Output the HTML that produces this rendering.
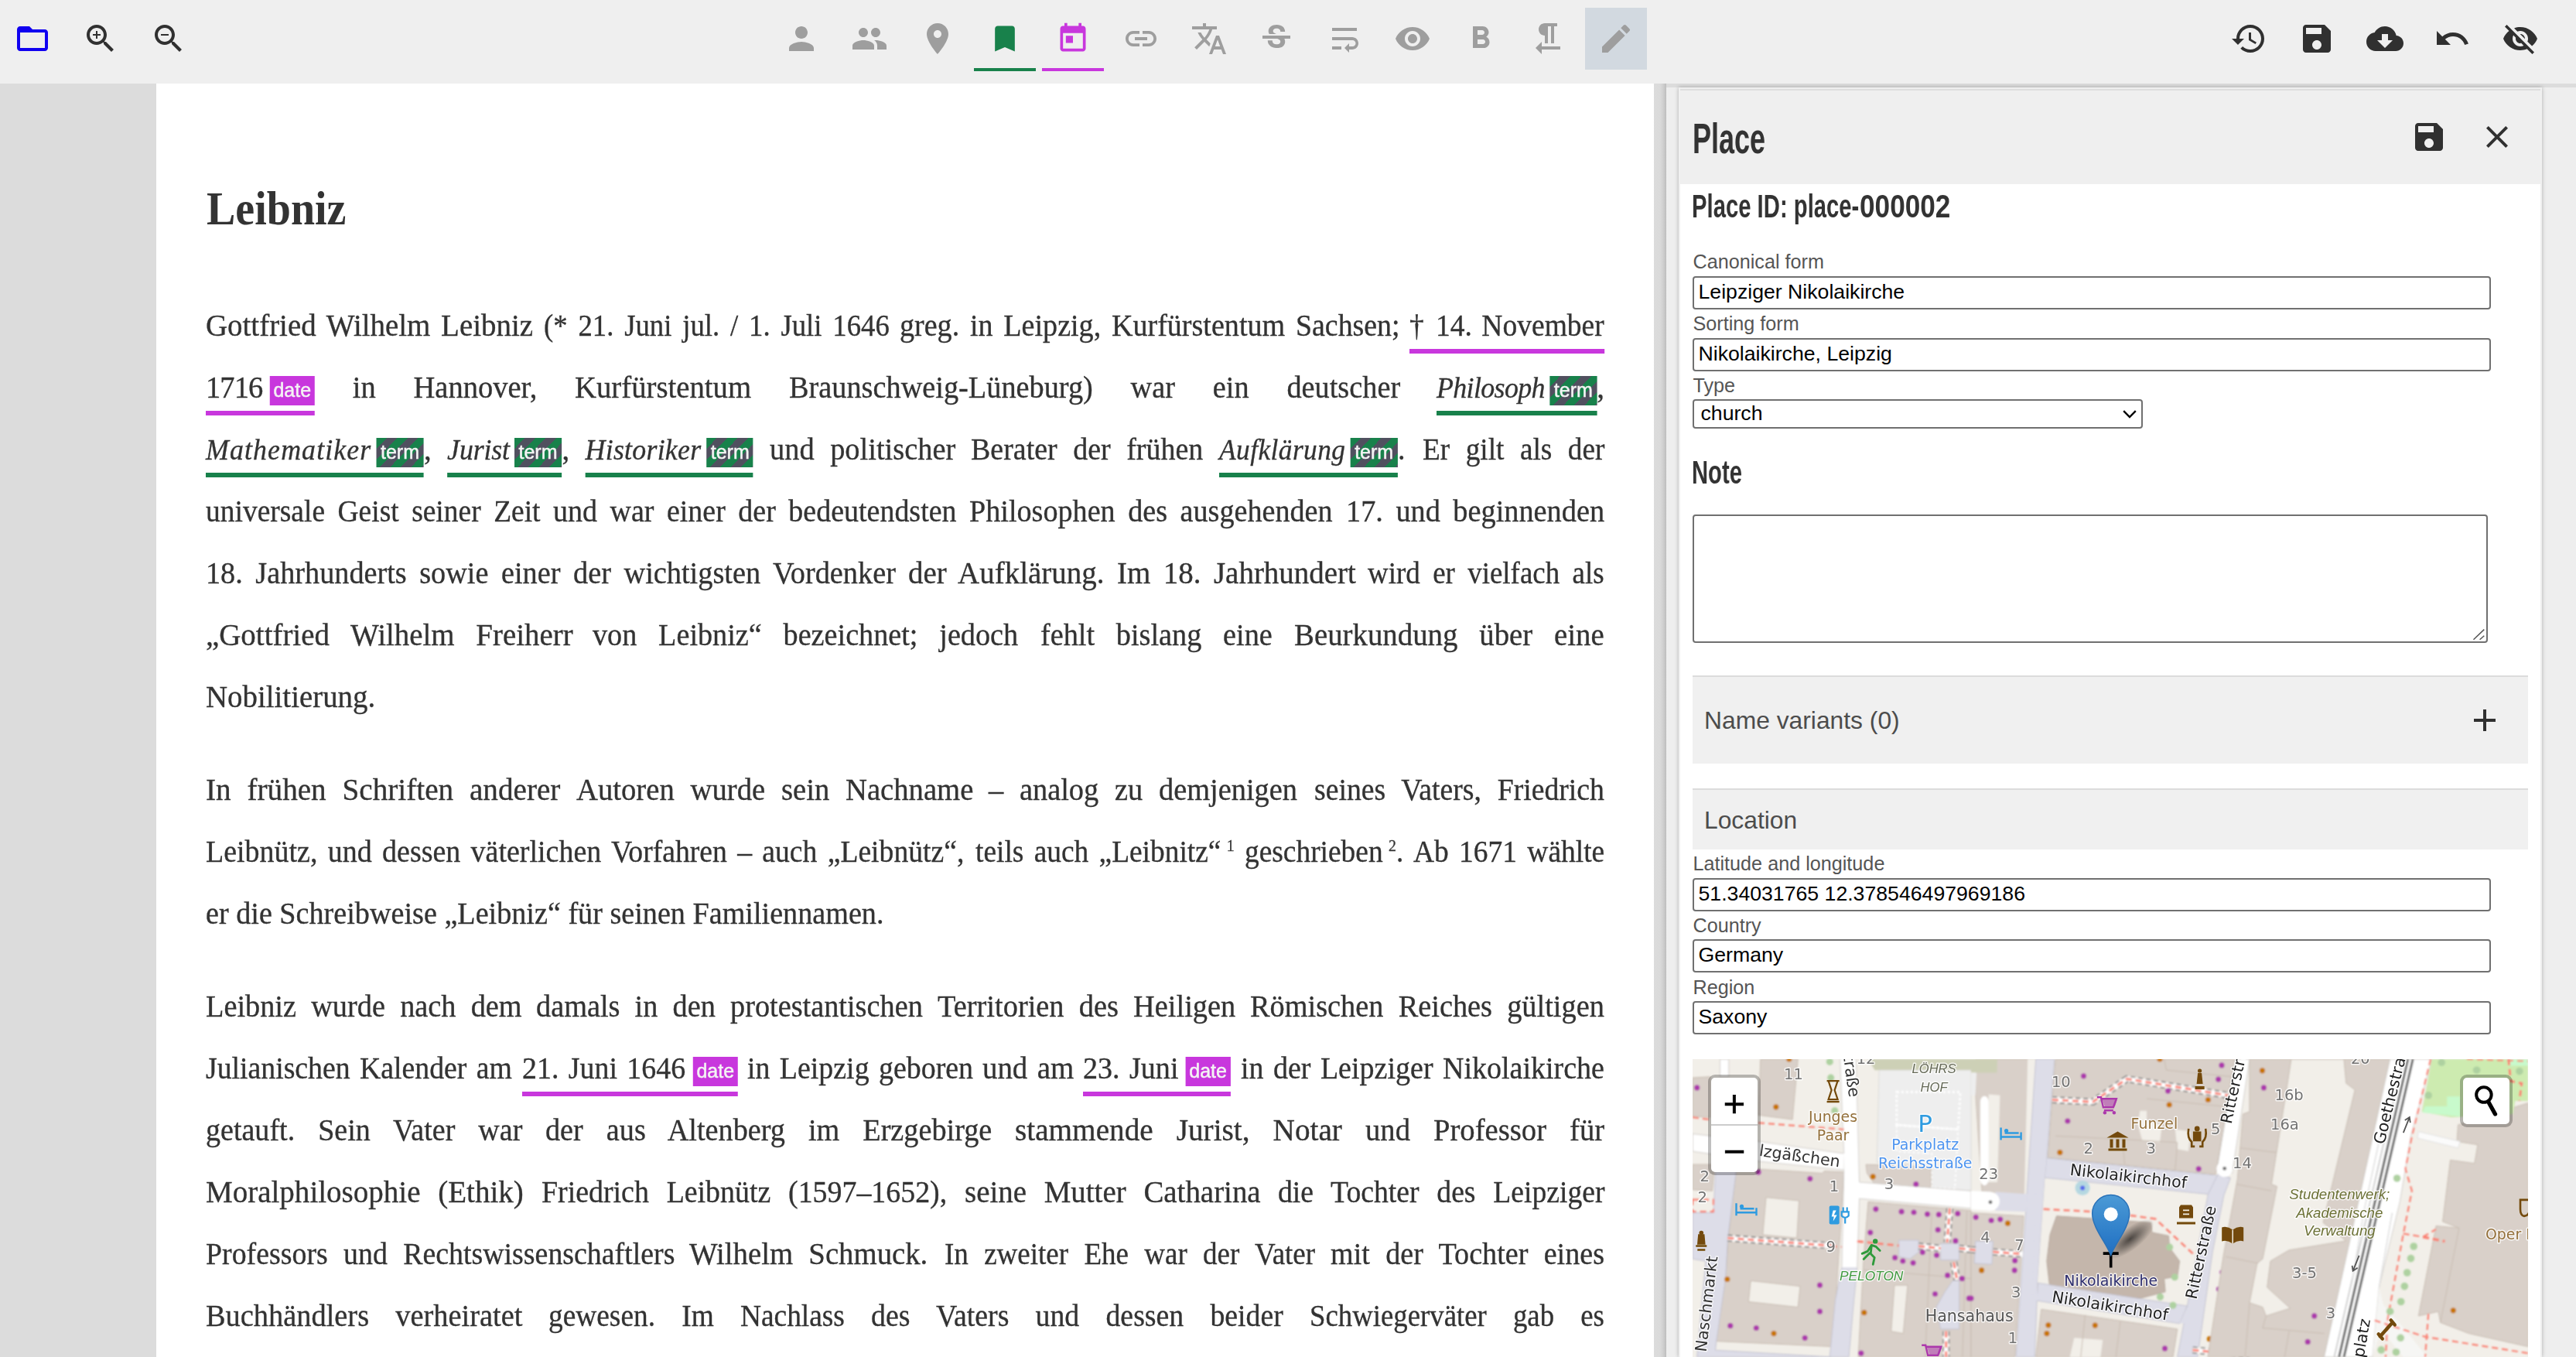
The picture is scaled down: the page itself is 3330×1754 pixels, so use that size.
<!DOCTYPE html>
<html lang="de"><head><meta charset="utf-8"><title>Leibniz</title>
<style>
html,body{margin:0;padding:0}
body{width:3330px;height:1754px;overflow:hidden;position:relative;background:#efefef;font-family:"Liberation Sans",sans-serif;color:#333}
.ic{position:absolute;display:block}
#toolbar{position:absolute;left:0;top:0;width:3330px;height:108px;background:#efefef}
.tbsel{position:absolute;background:#d2d9e0}
.tbul{position:absolute;top:88px;width:80px;height:4px}
#leftbar{position:absolute;left:0;top:108px;width:202px;height:1646px;background:#dcdcdc}
#page{position:absolute;left:202px;top:108px;width:1936px;height:1646px;background:#fff;overflow:hidden;font-family:"Liberation Serif",serif;color:#333}
#title{position:absolute;left:65px;top:120.6px;margin:0;font:bold 62px/80px "Liberation Serif",serif;color:#333;transform-origin:0 0;transform:scaleX(.903);white-space:nowrap}
#page p{margin:0}
.ln{position:absolute;left:64px;display:block;height:80px;line-height:80px;font-size:40.5px;white-space:nowrap;transform-origin:0 0;word-spacing:0;--k:.955;-webkit-text-stroke:.35px #333}
.ln.j{text-align:justify;text-align-last:justify;white-space:normal}
.ln.l{text-align:left}
.an{border-bottom:6px solid;padding-bottom:7.4px}
.an i{font-size:37.5px}
.an.d{border-color:#c837dd}
.an.t{border-color:#18814b}
.bd{display:inline-block;vertical-align:baseline;top:-1px;height:37.7px;width:calc(58px / var(--k));margin-left:calc(9.5px / var(--k));position:relative;line-height:37.7px}
.an.d .bd{background:#c837dd}
.an.t .bd{width:calc(61px / var(--k));margin-left:calc(6.5px / var(--k));background:repeating-linear-gradient(135deg,#18814b 0,#18814b 10px,#50505f 10px,#50505f 20px)}
.bd .in{display:block;font:25px/37.7px "Liberation Sans",sans-serif;color:#f4f4f4;-webkit-text-stroke:.5px #f4f4f4;text-align:center;text-align-last:center;white-space:nowrap;transform:scaleX(calc(1 / var(--k)));font-style:normal}
sup{font-size:21.5px;line-height:0;vertical-align:baseline;position:relative;top:-14.5px;margin-left:8px}
/* ---------- right side ---------- */
#gut{position:absolute;left:2138px;top:108px;width:16px;height:1646px;background:linear-gradient(to right,#dcdcdc 0,#dadada 8px,#cfcfcf 12px,#bdbdbd 16px)}
#side{position:absolute;left:2154px;top:108px;width:1176px;height:1646px;background:#eeeeee;border-top:5px solid #dcdcdc;box-sizing:border-box}
#card{position:absolute;left:2170px;top:113px;width:1116px;height:1641px;background:#fff;box-shadow:0 0 5px rgba(0,0,0,.28);box-sizing:border-box}
#card:before,#card:after{content:"";position:absolute;top:0;bottom:0;width:2px;background:#f0f0f0;z-index:3}#card:before{left:0}#card:after{right:0}
#chead{position:absolute;left:0;top:0;width:1116px;height:125px;background:#efefef}
#chead:before{content:"";position:absolute;left:2px;right:2px;top:2px;height:2px;background:#dedede}
.osw{position:absolute;margin:0;font-weight:bold;font-family:"Liberation Sans",sans-serif;color:#333;white-space:nowrap;transform-origin:0 0}
.lb{position:absolute;left:18.5px;font:25.2px/30px "Liberation Sans",sans-serif;color:#555;white-space:nowrap}
.inp{position:absolute;left:18px;width:1032px;height:43px;box-sizing:border-box;border:2px solid #707070;border-radius:4px;background:#fff;font:26.67px/37.5px "Liberation Sans",sans-serif;color:#000;padding:0 5.5px;white-space:nowrap;overflow:hidden}
.sel{position:absolute;left:18px;width:582px;height:38px;box-sizing:border-box;border:2px solid #707070;border-radius:4px;background:#fff;font:26.67px/33px "Liberation Sans",sans-serif;color:#000;padding:0 8.5px;white-space:nowrap}
.ta{position:absolute;left:18px;top:552px;width:1028px;height:166px;box-sizing:border-box;border:2px solid #707070;border-radius:4px;background:#fff}
.bar{position:absolute;left:18px;width:1080px;box-sizing:border-box;border-top:2px solid #dcdcdc;background:#f0f0f0}
.bar span{position:absolute;left:15px;font:31.8px/36px "Liberation Sans",sans-serif;color:#4c4c4c;white-space:nowrap}
#map{position:absolute;left:18px;top:1256px;width:1080px;height:385px;overflow:hidden;background:#d9d0c9}
#mapsvg{position:absolute;left:0;top:0;display:block}
.lctl{position:absolute;box-sizing:border-box;border:4px solid rgba(0,0,0,.25);border-radius:9px;background:#fff;background-clip:padding-box;overflow:hidden}
.lctl .lb1,.lctl .lb2{position:absolute;left:0;width:60px;height:60px;text-align:center;font:normal 49px/75px "Liberation Mono","DejaVu Sans Mono",monospace;-webkit-text-stroke:.6px #000;color:#000}
.lctl .lb1{top:0;border-bottom:2px solid #ccc}
.lctl .lb2{top:62px}
.osw .o1,.osw .o2{position:absolute;top:0;left:0;display:block;transform-origin:0 0;white-space:pre}
.osw .o1{transform:scaleX(.676)}
.osw .o2{left:217.5px;transform:scaleX(.8125)}

</style></head><body>
<div id="toolbar">
<svg class="ic" style="left:18.00px;top:26.00px;width:48px;height:48px" viewBox="0 0 24 24"><path fill="#1000f0" d="M20 6h-8l-2-2H4c-1.1 0-1.99.9-1.99 2L2 18c0 1.1.9 2 2 2h16c1.1 0 2-.9 2-2V8c0-1.1-.9-2-2-2zm0 12H4V8h16v10z"/></svg>
<svg class="ic" style="left:106.00px;top:26.00px;width:48px;height:48px" viewBox="0 0 24 24"><path fill="#303030" d="M15.5 14h-.79l-.28-.27C15.41 12.59 16 11.11 16 9.5 16 5.91 13.09 3 9.5 3S3 5.91 3 9.5 5.91 16 9.5 16c1.61 0 3.09-.59 4.23-1.57l.27.28v.79l5 4.99L20.49 19l-4.99-5zm-6 0C7.01 14 5 11.99 5 9.5S7.01 5 9.5 5 14 7.01 14 9.5 11.99 14 9.5 14zM12 10h-2v2H9v-2H7V9h2V7h1v2h2v1z"/></svg>
<svg class="ic" style="left:194.00px;top:26.00px;width:48px;height:48px" viewBox="0 0 24 24"><path fill="#303030" d="M15.5 14h-.79l-.28-.27C15.41 12.59 16 11.11 16 9.5 16 5.91 13.09 3 9.5 3S3 5.91 3 9.5 5.91 16 9.5 16c1.61 0 3.09-.59 4.23-1.57l.27.28v.79l5 4.99L20.49 19l-4.99-5zm-6 0C7.01 14 5 11.99 5 9.5S7.01 5 9.5 5 14 7.01 14 9.5 11.99 14 9.5 14zM7 9h5v1H7z"/></svg>
<div class="tbsel" style="left:2049px;top:10px;width:80px;height:80px"></div>
<svg class="ic" style="left:1012.00px;top:26.00px;width:48px;height:48px" viewBox="0 0 24 24"><path fill="#9e9e9e" d="M12 12c2.21 0 4-1.79 4-4s-1.79-4-4-4-4 1.79-4 4 1.79 4 4 4zm0 2c-2.67 0-8 1.34-8 4v2h16v-2c0-2.66-5.33-4-8-4z"/></svg>
<svg class="ic" style="left:1099.75px;top:26.00px;width:48px;height:48px" viewBox="0 0 24 24"><path fill="#9e9e9e" d="M16 11c1.66 0 2.99-1.34 2.99-3S17.66 5 16 5c-1.66 0-3 1.34-3 3s1.34 3 3 3zm-8 0c1.66 0 2.99-1.34 2.99-3S9.66 5 8 5C6.34 5 5 6.34 5 8s1.34 3 3 3zm0 2c-2.33 0-7 1.17-7 3.5V19h14v-2.5c0-2.33-4.67-3.5-7-3.5zm8 0c-.29 0-.62.02-.97.05 1.16.84 1.97 1.97 1.97 3.45V19h6v-2.5c0-2.33-4.67-3.5-7-3.5z"/></svg>
<svg class="ic" style="left:1187.50px;top:26.00px;width:48px;height:48px" viewBox="0 0 24 24"><path fill="#9e9e9e" d="M12 2C8.13 2 5 5.13 5 9c0 5.25 7 13 7 13s7-7.75 7-13c0-3.87-3.13-7-7-7zm0 9.5c-1.38 0-2.5-1.12-2.5-2.5s1.12-2.5 2.5-2.5 2.5 1.12 2.5 2.5-1.12 2.5-2.5 2.5z"/></svg>
<svg class="ic" style="left:1277.25px;top:28.00px;width:44px;height:44px" viewBox="0 0 24 24"><path fill="#18814b" d="M17 3H7c-1.1 0-1.99.9-1.99 2L5 21l7-3 7 3V5c0-1.1-.9-2-2-2z"/></svg>
<div class="tbul" style="left:1259.25px;background:#18814b"></div>
<svg class="ic" style="left:1365.00px;top:28.00px;width:44px;height:44px" viewBox="0 0 24 24"><path fill="#c837dd" d="M19 3h-1V1h-2v2H8V1H6v2H5c-1.11 0-1.99.9-1.99 2L3 19c0 1.1.89 2 2 2h14c1.1 0 2-.9 2-2V5c0-1.1-.9-2-2-2zm0 16H5V8h14v11zM7 10h5v5H7z"/></svg>
<div class="tbul" style="left:1347.00px;background:#c837dd"></div>
<svg class="ic" style="left:1450.75px;top:26.00px;width:48px;height:48px" viewBox="0 0 24 24"><path fill="#9e9e9e" d="M3.9 12c0-1.71 1.39-3.1 3.1-3.1h4V7H7c-2.76 0-5 2.24-5 5s2.24 5 5 5h4v-1.9H7c-1.71 0-3.1-1.39-3.1-3.1zM8 13h8v-2H8v2zm9-6h-4v1.9h4c1.71 0 3.1 1.39 3.1 3.1s-1.39 3.1-3.1 3.1h-4V17h4c2.76 0 5-2.24 5-5s-2.24-5-5-5z"/></svg>
<svg class="ic" style="left:1538.50px;top:26.00px;width:48px;height:48px" viewBox="0 0 24 24"><path fill="#9e9e9e" d="M12.87 15.07l-2.54-2.51.03-.03c1.74-1.94 2.98-4.17 3.71-6.53H17V4h-7V2H8v2H1v1.99h11.17C11.5 7.92 10.44 9.75 9 11.35 8.07 10.32 7.3 9.19 6.69 8h-2c.73 1.63 1.73 3.17 2.98 4.56l-5.09 5.02L4 19l5-5 3.11 3.11.76-2.04zM18.5 10h-2L12 22h2l1.12-3h4.75L21 22h2l-4.5-12zm-2.62 7l1.62-4.33L19.12 17h-3.24z"/></svg>
<svg class="ic" style="left:1626.25px;top:26.00px;width:48px;height:48px" viewBox="0 0 24 24"><path fill="#9e9e9e" d="M7.24 8.75c-.26-.48-.39-1.03-.39-1.67 0-.61.13-1.16.4-1.67.26-.5.63-.93 1.11-1.29.48-.35 1.05-.63 1.7-.83.66-.19 1.39-.29 2.18-.29.81 0 1.54.11 2.21.34.66.22 1.23.54 1.69.94.47.4.83.88 1.08 1.43.25.55.38 1.15.38 1.81h-3.01c0-.31-.05-.59-.15-.85-.09-.27-.24-.49-.44-.68-.2-.19-.45-.33-.75-.44-.3-.1-.66-.16-1.06-.16-.39 0-.74.04-1.03.13-.29.09-.53.21-.72.36-.19.16-.34.34-.44.55-.1.21-.15.43-.15.66 0 .48.25.88.74 1.21.38.25.77.48 1.41.7H7.39c-.05-.08-.11-.17-.15-.25zM21 12v-2H3v2h9.62c.18.07.4.14.55.2.37.17.66.34.87.51.21.17.35.36.43.57.07.2.11.43.11.69 0 .23-.05.45-.14.66-.09.2-.23.38-.42.53-.19.15-.42.26-.71.35-.29.08-.63.13-1.01.13-.43 0-.83-.04-1.18-.13s-.66-.23-.91-.42c-.25-.19-.45-.44-.59-.75-.14-.31-.25-.76-.25-1.21H6.4c0 .55.08 1.13.24 1.58.16.45.37.85.65 1.21.28.35.6.66.98.92.37.26.78.48 1.22.65.44.17.9.3 1.38.39.48.08.96.13 1.44.13.8 0 1.53-.09 2.18-.28s1.21-.45 1.67-.79c.46-.34.82-.77 1.07-1.27s.38-1.07.38-1.71c0-.6-.1-1.14-.31-1.61-.05-.11-.11-.23-.17-.33H21z"/></svg>
<svg class="ic" style="left:1714.00px;top:26.00px;width:48px;height:48px" viewBox="0 0 24 24"><path fill="#9e9e9e" d="M4 19h6v-2H4v2zM20 5H4v2h16V5zm-3 6H4v2h13.25c1.1 0 2 .9 2 2s-.9 2-2 2H15v-2l-3 3 3 3v-2h2c2.21 0 4-1.79 4-4s-1.79-4-4-4z"/></svg>
<svg class="ic" style="left:1801.75px;top:26.00px;width:48px;height:48px" viewBox="0 0 24 24"><path fill="#9e9e9e" d="M12 4.5C7 4.5 2.73 7.61 1 12c1.73 4.39 6 7.5 11 7.5s9.27-3.11 11-7.5c-1.73-4.39-6-7.5-11-7.5zM12 17c-2.76 0-5-2.24-5-5s2.24-5 5-5 5 2.24 5 5-2.24 5-5 5zm0-8c-1.66 0-3 1.34-3 3s1.34 3 3 3 3-1.34 3-3-1.34-3-3-3z"/></svg>
<svg class="ic" style="left:1889.50px;top:26.00px;width:48px;height:48px" viewBox="0 0 24 24"><path fill="#9e9e9e" d="M15.6 10.79c.97-.67 1.65-1.77 1.65-2.79 0-2.26-1.75-4-4-4H7v14h7.04c2.09 0 3.71-1.7 3.71-3.79 0-1.52-.86-2.82-2.15-3.42zM10 6.5h3c.83 0 1.5.67 1.5 1.5s-.67 1.5-1.5 1.5h-3v-3zm3.5 9H10v-3h3.5c.83 0 1.5.67 1.5 1.5s-.67 1.5-1.5 1.5z"/></svg>
<svg class="ic" style="left:1977.25px;top:26.00px;width:48px;height:48px" viewBox="0 0 24 24"><path fill="#9e9e9e" d="M10 10v5h2V4h2v11h2V4h2V2h-8C7.79 2 6 3.79 6 6s1.79 4 4 4zm-2 7v-3l-4 4 4 4v-3h12v-2H8z"/></svg>
<svg class="ic" style="left:2065.00px;top:26.00px;width:48px;height:48px" viewBox="0 0 24 24"><path fill="#9e9e9e" d="M3 17.25V21h3.75L17.81 9.94l-3.75-3.75L3 17.25zM20.71 7.04c.39-.39.39-1.02 0-1.41l-2.34-2.34c-.39-.39-1.02-.39-1.41 0l-1.83 1.83 3.75 3.75 1.83-1.83z"/></svg>
<svg class="ic" style="left:2883.00px;top:26.00px;width:48px;height:48px" viewBox="0 0 24 24"><path fill="#303030" d="M13 3c-4.97 0-9 4.03-9 9H1l3.89 3.89.07.14L9 12H6c0-3.87 3.13-7 7-7s7 3.13 7 7-3.13 7-7 7c-1.93 0-3.68-.79-4.94-2.06l-1.42 1.42C8.27 19.99 10.51 21 13 21c4.97 0 9-4.03 9-9s-4.03-9-9-9zm-1 5v5l4.28 2.54.72-1.21-3.5-2.08V8H12z"/></svg>
<svg class="ic" style="left:2970.75px;top:26.00px;width:48px;height:48px" viewBox="0 0 24 24"><path fill="#303030" d="M17 3H5c-1.11 0-2 .9-2 2v14c0 1.1.89 2 2 2h14c1.1 0 2-.9 2-2V7l-4-4zm-5 16c-1.66 0-3-1.34-3-3s1.34-3 3-3 3 1.34 3 3-1.34 3-3 3zm3-10H5V5h10v4z"/></svg>
<svg class="ic" style="left:3058.50px;top:26.00px;width:48px;height:48px" viewBox="0 0 24 24"><path fill="#303030" d="M19.35 10.04C18.67 6.59 15.64 4 12 4 9.11 4 6.6 5.64 5.35 8.04 2.34 8.36 0 10.91 0 14c0 3.31 2.69 6 6 6h13c2.76 0 5-2.24 5-5 0-2.64-2.05-4.78-4.65-4.96zM17 13l-5 5-5-5h3V9h4v4h3z"/></svg>
<svg class="ic" style="left:3146.25px;top:26.00px;width:48px;height:48px" viewBox="0 0 24 24"><path fill="#303030" d="M12.5 8c-2.65 0-5.05.99-6.9 2.6L2 7v9h9l-3.62-3.62c1.39-1.16 3.16-1.88 5.12-1.88 3.54 0 6.55 2.31 7.6 5.5l2.37-.78C21.08 11.03 17.15 8 12.5 8z"/></svg>
<svg class="ic" style="left:3234.00px;top:26.00px;width:48px;height:48px" viewBox="0 0 24 24"><path fill="#303030" d="M12 7c2.76 0 5 2.24 5 5 0 .65-.13 1.26-.36 1.83l2.92 2.92c1.51-1.26 2.7-2.89 3.43-4.75-1.73-4.39-6-7.5-11-7.5-1.4 0-2.74.25-3.98.7l2.16 2.16C10.74 7.13 11.35 7 12 7zM2 4.27l2.28 2.28.46.46C3.08 8.3 1.78 10.02 1 12c1.73 4.39 6 7.5 11 7.5 1.55 0 3.03-.3 4.38-.84l.42.42L19.73 22 21 20.73 3.27 3 2 4.27zM7.53 9.8l1.55 1.55c-.05.21-.08.43-.08.65 0 1.66 1.34 3 3 3 .22 0 .44-.03.65-.08l1.55 1.55c-.67.33-1.41.53-2.2.53-2.76 0-5-2.24-5-5 0-.79.2-1.53.53-2.2zm4.31-.78l3.15 3.15.02-.16c0-1.66-1.34-3-3-3l-.17.01z"/></svg>
</div>
<div id="leftbar"></div>
<div id="page">
<h1 id="title">Leibniz</h1>
<p>
<span class="ln j" style="top:273.33px;left:64.00px;width:440.24px;--k:0.9608;transform:scaleX(0.9608)">Gottfried Wilhelm Leibniz</span> 
<span class="ln j" style="top:273.33px;left:500.60px;width:492.36px;--k:0.9075;transform:scaleX(0.9075)">(* 21. Juni jul. / 1. Juli 1646</span> 
<span class="ln j" style="top:273.33px;left:961.00px;width:529.92px;--k:0.9400;transform:scaleX(0.9400)">greg. in Leipzig, Kurfürstentum</span> 
<span class="ln l" style="top:273.33px;left:1473.20px;width:143.97px;--k:0.9342;transform:scaleX(0.9342)">Sachsen;</span> 
<span class="ln j" style="top:273.33px;left:1620.20px;width:271.60px;--k:0.9271;transform:scaleX(0.9271)"><span class="an d">† 14. November</span></span>
<span class="ln j" style="top:353.33px;left:64.00px;width:450.47px;--k:0.9512;transform:scaleX(0.9512)"><span class="an d"><span style="letter-spacing:-0.95px">1716</span><span class="bd"><span class="in">date</span></span></span> in Hannover,</span> 
<span class="ln l" style="top:353.33px;left:541.30px;width:238.45px;--k:0.9566;transform:scaleX(0.9566)">Kurfürstentum</span> 
<span class="ln j" style="top:353.33px;left:818.30px;width:835.55px;--k:0.9457;transform:scaleX(0.9457)">Braunschweig-Lüneburg) war ein deutscher</span> 
<span class="ln l" style="top:353.33px;left:1655.00px;width:226.84px;--k:0.9566;transform:scaleX(0.9566)"><span class="an t"><i style="letter-spacing:-0.66px">Philosoph</i><span class="bd"><span class="in">term</span></span></span>,</span>
<span class="ln j" style="top:433.33px;left:64.00px;width:741.48px;--k:0.9546;transform:scaleX(0.9546)"><span class="an t"><i style="letter-spacing:1.19px">Mathematiker</i><span class="bd"><span class="in">term</span></span></span>, <span class="an t"><i style="letter-spacing:-0.13px">Jurist</i><span class="bd"><span class="in">term</span></span></span>, <span class="an t"><i style="letter-spacing:0.27px">Historiker</i><span class="bd"><span class="in">term</span></span></span></span> 
<span class="ln j" style="top:433.33px;left:792.70px;width:253.33px;--k:0.9486;transform:scaleX(0.9486)">und politischer</span> 
<span class="ln j" style="top:433.33px;left:1053.30px;width:320.33px;--k:0.9375;transform:scaleX(0.9375)">Berater der frühen</span> 
<span class="ln l" style="top:433.33px;left:1374.30px;width:255.18px;--k:0.9425;transform:scaleX(0.9425)"><span class="an t"><i style="letter-spacing:0.47px">Aufklärung</i><span class="bd"><span class="in">term</span></span></span>.</span> 
<span class="ln j" style="top:433.33px;left:1636.50px;width:255.72px;--k:0.9209;transform:scaleX(0.9209)">Er gilt als der</span>
<span class="ln j" style="top:513.33px;left:64.00px;width:467.33px;--k:0.9255;transform:scaleX(0.9255)">universale Geist seiner Zeit</span> 
<span class="ln j" style="top:513.33px;left:512.80px;width:556.17px;--k:0.9378;transform:scaleX(0.9378)">und war einer der bedeutendsten</span> 
<span class="ln j" style="top:513.33px;left:1050.60px;width:498.45px;--k:0.9421;transform:scaleX(0.9421)">Philosophen des ausgehenden</span> 
<span class="ln j" style="top:513.33px;left:1537.90px;width:353.20px;--k:0.9459;transform:scaleX(0.9459)">17. und beginnenden</span>
<span class="ln j" style="top:593.33px;left:64.00px;width:485.43px;--k:0.9443;transform:scaleX(0.9443)">18. Jahrhunderts sowie einer</span> 
<span class="ln j" style="top:593.33px;left:538.60px;width:440.52px;--k:0.9466;transform:scaleX(0.9466)">der wichtigsten Vordenker</span> 
<span class="ln j" style="top:593.33px;left:971.80px;width:601.71px;--k:0.9621;transform:scaleX(0.9621)">der Aufklärung. Im 18. Jahrhundert</span> 
<span class="ln j" style="top:593.33px;left:1566.40px;width:335.44px;--k:0.9110;transform:scaleX(0.9110)">wird er vielfach als</span>
<span class="ln j" style="top:673.33px;left:64.00px;width:494.11px;--k:0.9607;transform:scaleX(0.9607)">„Gottfried Wilhelm Freiherr</span> 
<span class="ln j" style="top:673.33px;left:564.40px;width:583.18px;--k:0.9433;transform:scaleX(0.9433)">von Leibniz“ bezeichnet; jedoch</span> 
<span class="ln j" style="top:673.33px;left:1143.00px;width:317.57px;--k:0.9441;transform:scaleX(0.9441)">fehlt bislang eine</span> 
<span class="ln j" style="top:673.33px;left:1471.30px;width:417.89px;--k:0.9589;transform:scaleX(0.9589)">Beurkundung über eine</span>
<span class="ln l" style="top:753.33px;left:64px;width:1883.33px;--k:0.9600;transform:scaleX(0.9600)">Nobilitierung.</span>
</p>
<p>
<span class="ln j" style="top:873.33px;left:64.00px;width:473.79px;--k:0.9675;transform:scaleX(0.9675)">In frühen Schriften anderer</span> 
<span class="ln j" style="top:873.33px;left:542.70px;width:537.68px;--k:0.9548;transform:scaleX(0.9548)">Autoren wurde sein Nachname</span> 
<span class="ln j" style="top:873.33px;left:1076.40px;width:421.26px;--k:0.9472;transform:scaleX(0.9472)">– analog zu demjenigen</span> 
<span class="ln j" style="top:873.33px;left:1497.10px;width:402.74px;--k:0.9309;transform:scaleX(0.9309)">seines Vaters, Friedrich</span>
<span class="ln j" style="top:953.33px;left:64.00px;width:545.25px;--k:0.9377;transform:scaleX(0.9377)">Leibnütz, und dessen väterlichen</span> 
<span class="ln j" style="top:953.33px;left:587.50px;width:490.83px;--k:0.9298;transform:scaleX(0.9298)">Vorfahren – auch „Leibnütz“,</span> 
<span class="ln j" style="top:953.33px;left:1058.80px;width:599.09px;--k:0.9236;transform:scaleX(0.9236)">teils auch „Leibnitz“<sup>1</sup> geschrieben<sup>2</sup>.</span> 
<span class="ln j" style="top:953.33px;left:1624.80px;width:267.21px;--k:0.9251;transform:scaleX(0.9251)">Ab 1671 wählte</span>
<span class="ln l" style="top:1033.33px;left:64px;width:1918.51px;--k:0.9424;transform:scaleX(0.9424)">er die Schreibweise „Leibniz“ für seinen Familiennamen.</span>
</p>
<p>
<span class="ln j" style="top:1153.33px;left:64.00px;width:431.99px;--k:0.9459;transform:scaleX(0.9459)">Leibniz wurde nach dem</span> 
<span class="ln j" style="top:1153.33px;left:491.10px;width:528.82px;--k:0.9451;transform:scaleX(0.9451)">damals in den protestantischen</span> 
<span class="ln j" style="top:1153.33px;left:1009.90px;width:406.55px;--k:0.9477;transform:scaleX(0.9477)">Territorien des Heiligen</span> 
<span class="ln j" style="top:1153.33px;left:1414.20px;width:483.75px;--k:0.9464;transform:scaleX(0.9464)">Römischen Reiches gültigen</span>
<span class="ln j" style="top:1233.33px;left:64.00px;width:424.71px;--k:0.9322;transform:scaleX(0.9322)">Julianischen Kalender am</span> 
<span class="ln j" style="top:1233.33px;left:473.10px;width:623.21px;--k:0.9355;transform:scaleX(0.9355)"><span class="an d"><span>21. Juni 1646</span><span class="bd"><span class="in">date</span></span></span> in Leipzig geboren</span> 
<span class="ln j" style="top:1233.33px;left:1068.30px;width:123.15px;--k:0.9598;transform:scaleX(0.9598)">und am</span> 
<span class="ln j" style="top:1233.33px;left:1197.90px;width:203.10px;--k:0.9404;transform:scaleX(0.9404)"><span class="an d"><span>23. Juni</span><span class="bd"><span class="in">date</span></span></span></span> 
<span class="ln j" style="top:1233.33px;left:1402.00px;width:500.67px;--k:0.9387;transform:scaleX(0.9387)">in der Leipziger Nikolaikirche</span>
<span class="ln j" style="top:1313.33px;left:64.00px;width:435.80px;--k:0.9394;transform:scaleX(0.9394)">getauft. Sein Vater war</span> 
<span class="ln j" style="top:1313.33px;left:503.30px;width:611.44px;--k:0.9442;transform:scaleX(0.9442)">der aus Altenberg im Erzgebirge</span> 
<span class="ln j" style="top:1313.33px;left:1110.40px;width:436.47px;--k:0.9689;transform:scaleX(0.9689)">stammende Jurist, Notar</span> 
<span class="ln j" style="top:1313.33px;left:1562.90px;width:323.83px;--k:0.9545;transform:scaleX(0.9545)">und Professor für</span>
<span class="ln j" style="top:1393.33px;left:64.00px;width:426.35px;--k:0.9635;transform:scaleX(0.9635)">Moralphilosophie (Ethik)</span> 
<span class="ln j" style="top:1393.33px;left:497.90px;width:560.51px;--k:0.9352;transform:scaleX(0.9352)">Friedrich Leibnütz (1597–1652),</span> 
<span class="ln j" style="top:1393.33px;left:1045.20px;width:398.35px;--k:0.9605;transform:scaleX(0.9605)">seine Mutter Catharina</span> 
<span class="ln j" style="top:1393.33px;left:1449.50px;width:454.60px;--k:0.9294;transform:scaleX(0.9294)">die Tochter des Leipziger</span>
<span class="ln j" style="top:1473.33px;left:64.00px;width:648.58px;--k:0.9350;transform:scaleX(0.9350)">Professors und Rechtswissenschaftlers</span> 
<span class="ln j" style="top:1473.33px;left:689.40px;width:322.17px;--k:0.9570;transform:scaleX(0.9570)">Wilhelm Schmuck.</span> 
<span class="ln j" style="top:1473.33px;left:1019.40px;width:524.04px;--k:0.9143;transform:scaleX(0.9143)">In zweiter Ehe war der Vater</span> 
<span class="ln j" style="top:1473.33px;left:1518.00px;width:376.00px;--k:0.9415;transform:scaleX(0.9415)">mit der Tochter eines</span>
<span class="ln j" style="top:1553.33px;left:64.00px;width:431.91px;--k:0.9479;transform:scaleX(0.9479)">Buchhändlers verheiratet</span> 
<span class="ln j" style="top:1553.33px;left:507.40px;width:414.86px;--k:0.9230;transform:scaleX(0.9230)">gewesen. Im Nachlass</span> 
<span class="ln j" style="top:1553.33px;left:924.30px;width:570.96px;--k:0.9333;transform:scaleX(0.9333)">des Vaters und dessen beider</span> 
<span class="ln j" style="top:1553.33px;left:1491.10px;width:419.41px;--k:0.9082;transform:scaleX(0.9082)">Schwiegerväter gab es</span>
</p>
</div>
<div id="gut"></div>
<div id="side"></div>
<div id="card">
 <div id="chead">
  <h2 class="osw" style="left:18px;top:33.6px;font-size:55.6px;line-height:64px;transform:scaleX(.648)">Place</h2>
  <svg class="ic" style="left:946px;top:40px;width:48px;height:48px" viewBox="0 0 24 24"><path fill="#303030" d="M17 3H5c-1.11 0-2 .9-2 2v14c0 1.1.89 2 2 2h14c1.1 0 2-.9 2-2V7l-4-4zm-5 16c-1.66 0-3-1.34-3-3s1.34-3 3-3 3 1.34 3 3-1.34 3-3 3zm3-10H5V5h10v4z"/></svg>
  <svg class="ic" style="left:1034px;top:40px;width:48px;height:48px" viewBox="0 0 24 24"><path fill="#303030" d="M19 6.41L17.59 5 12 10.59 6.41 5 5 6.41 10.59 12 5 17.59 6.41 19 12 13.41 17.59 19 19 17.59 13.41 12z"/></svg>
 </div>
 <h3 class="osw" style="left:16.5px;top:128px;font-size:43.3px;line-height:50px"><span class="o1">Place ID: place-</span><span class="o2">000002</span></h3>
 <label class="lb" style="top:210.3px">Canonical form</label>
 <div class="inp" style="top:244px">Leipziger Nikolaikirche</div>
 <label class="lb" style="top:290.3px">Sorting form</label>
 <div class="inp" style="top:324px">Nikolaikirche, Leipzig</div>
 <label class="lb" style="top:370.3px">Type</label>
 <div class="sel" style="top:403px">church<svg class="ic" style="left:0;top:0;width:578px;height:34px" viewBox="2 2 578 34"><path d="M557.2 15.200l7.800 7.800 7.800-7.800" fill="none" stroke="#000" stroke-width="2.400"/></svg></div>
 <h3 class="osw" style="left:16.5px;top:471.700px;font-size:43.3px;line-height:50px;transform:scaleX(.675)">Note</h3>
 <div class="ta"><svg class="ic" style="left:0;top:0;width:1024px;height:162px" viewBox="2 2 1024 162"><path d="M1009.5 161.800L1023.300 148.600M1017.600 161.800l5.700-5.100" fill="none" stroke="#555" stroke-width="1.500"/></svg></div>
 <div class="bar" style="top:760px;height:114px"><span style="top:37.500px">Name variants (0)</span>
  <svg class="ic" style="left:1000px;top:32px;width:48px;height:48px" viewBox="0 0 24 24"><path fill="#303030" d="M19 13h-6v6h-2v-6H5v-2h6V5h2v6h6v2z"/></svg></div>
 <div class="bar" style="top:906px;height:79px"><span style="top:20.500px">Location</span></div>
 <label class="lb" style="top:988.300px">Latitude and longitude</label>
 <div class="inp" style="top:1022px">51.34031765 12.378546497969186</div>
 <label class="lb" style="top:1068.300px">Country</label>
 <div class="inp" style="top:1101px">Germany</div>
 <label class="lb" style="top:1147.500px">Region</label>
 <div class="inp" style="top:1181px">Saxony</div>
 <div id="map">
<svg id="mapsvg" width="1080" height="385" viewBox="0 0 1080 385" font-family="DejaVu Sans, Liberation Sans, sans-serif">
<rect width="1080" height="385" fill="#f2efe9"/>
<g filter="url(#mb)">
<polygon points="0.0,24.1 22.7,22.7 22.7,75.2 0.0,73.8" fill="#d9d0c9" stroke="#c8bcb1" stroke-width="1"/>
<polygon points="87.9,0.0 136.2,0.0 129.1,78.0 85.1,72.3" fill="#d9d0c9" stroke="#c8bcb1" stroke-width="1"/>
<polygon points="0.0,136.2 28.4,136.2 25.5,170.2 0.0,168.8" fill="#d9d0c9" stroke="#c8bcb1" stroke-width="1"/>
<polygon points="56.7,140.4 167.4,147.5 170.2,144.7 195.7,146.1 181.6,371.6 29.8,364.5 42.6,283.7 46.8,227.0" fill="#d9d0c9" stroke="#c8bcb1" stroke-width="1"/>
<polygon points="95.0,178.7 137.6,183.0 134.8,231.2 90.8,227.0" fill="#f2efe9" stroke="#c8bcb1" stroke-width="1"/>
<polygon points="75.2,286.5 139.0,293.6 136.2,320.6 72.3,313.5" fill="#f2efe9" stroke="#c8bcb1" stroke-width="1"/>
<polygon points="227.0,0.0 360.0,0.0 360.0,14.2 235.5,14.2" fill="#cdd0b6"/>
<polygon points="241.1,14.2 360.0,14.2 360.0,170.2 309.2,167.4 309.2,136.2 238.3,133.3" fill="#eeeeee" stroke="#dcdcd8" stroke-width="1"/>
<polygon points="263.8,42.6 346.1,42.6 343.3,90.8 263.8,85.1" fill="none" stroke="#ffffff" stroke-width="3" stroke-dasharray="3 3"/>
<polygon points="263.8,85.1 343.3,90.8 339.0,167.4 309.2,166.0 309.2,122.0 263.8,119.1" fill="none" stroke="#ffffff" stroke-width="2" stroke-dasharray="3 3"/>
<polygon points="224.1,136.2 307.8,139.0 307.8,166.0 235.5,161.7 225.5,147.5" fill="#d9d0c9" stroke="#c8bcb1" stroke-width="1"/>
<polygon points="227.0,184.4 360.0,195.7 360.0,385.0 214.2,385.0 221.3,255.3" fill="#d9d0c9" stroke="#c8bcb1" stroke-width="1"/>
<polygon points="261.0,292.2 278.0,292.2 272.3,354.6 256.7,351.8" fill="#f2efe9" stroke="#c8bcb1" stroke-width="1"/>
<polyline points="309.2,198.6 300.7,385.0" fill="none" stroke="#c8bcb1" stroke-width="1"/>
<polyline points="221.3,272.3 360.0,283.7" fill="none" stroke="#c8bcb1" stroke-width="1"/>
<polyline points="354.6,195.7 348.9,385.0" fill="none" stroke="#c8bcb1" stroke-width="1"/>
<polygon points="29.8,141.8 56.7,141.8 45.4,232.6 42.6,283.7 30.6,366.0 29.5,376.2 179.3,385.0 5.7,385.0 17.0,261.0 0.0,258.2 0.0,198.6 27.0,198.6" fill="#dddde8" stroke="#c3c3d0" stroke-width="1"/>
<polygon points="192.9,269.5 212.8,269.5 208.5,312.1 202.0,385.0 177.3,385.0 184.4,312.1" fill="#dddde8" stroke="#c3c3d0" stroke-width="1"/>
<polygon points="266.7,234.0 292.2,234.0 292.2,249.6 280.9,258.2 266.7,255.3" fill="#dddde8" stroke="#c3c3d0" stroke-width="1"/>
<polygon points="320.6,238.3 344.7,238.3 344.7,259.6 320.6,259.6" fill="#dddde8" stroke="#c3c3d0" stroke-width="1"/>
<polygon points="336.2,286.5 344.7,286.5 344.7,348.9 320.6,348.9 314.9,320.6 326.2,300.7" fill="#dddde8" stroke="#c3c3d0" stroke-width="1"/>
<polygon points="0.0,96.5 85.1,106.4 195.7,122.0 195.7,143.3 85.1,131.9 0.0,119.1" fill="#ffffff" stroke="#d0ccc8" stroke-width="1"/>
<polygon points="214.2,158.9 360.0,170.2 360.0,192.9 214.2,180.1" fill="#ffffff" stroke="#d0ccc8" stroke-width="1"/>
<polygon points="190.6,0.0 211.3,0.0 215.6,124.8 215.6,181.6 212.8,269.5 192.9,269.5 195.7,141.8" fill="#ffffff"/>
<polyline points="190.6,0.0 195.7,122.0" fill="none" stroke="#d0ccc8" stroke-width="1"/>
<polyline points="195.7,143.3 192.9,269.5" fill="none" stroke="#d0ccc8" stroke-width="1"/>
<polyline points="211.3,0.0 215.6,158.9" fill="none" stroke="#d0ccc8" stroke-width="1"/>
<polyline points="215.6,180.1 212.8,269.5" fill="none" stroke="#d0ccc8" stroke-width="1"/>
<polygon points="35.5,0.0 46.8,0.0 46.8,22.7 35.5,22.7" fill="#ffffff" stroke="#d0ccc8" stroke-width="1"/>
<polyline points="0.0,75.2 21.3,78.0" fill="none" stroke="#fa8072" stroke-width="2.2" stroke-dasharray="8 5"/>
<polyline points="85.1,82.3 195.7,90.8" fill="none" stroke="#fa8072" stroke-width="2.2" stroke-dasharray="8 5"/>
<polyline points="45.4,231.2 178.7,241.1" fill="none" stroke="#f5f2ee" stroke-width="8.5"/><polyline points="45.4,231.2 178.7,241.1" fill="none" stroke="#555555" stroke-width="9.2" stroke-dasharray="6 4" stroke-opacity=".7"/><polyline points="45.4,231.2 178.7,241.1" fill="none" stroke="#ffffff" stroke-width="5.6"/><polyline points="45.4,231.2 178.7,241.1" fill="none" stroke="#fa8072" stroke-width="3" stroke-dasharray="8 5"/>
<polyline points="178.7,241.7 192.9,242.8" fill="none" stroke="#fa8072" stroke-width="2.2" stroke-dasharray="8 5"/>
<polyline points="212.8,235.5 266.7,241.1" fill="none" stroke="#fa8072" stroke-width="3" stroke-dasharray="8 5"/>
<polyline points="292.2,241.7 320.6,244.5" fill="none" stroke="#f5f2ee" stroke-width="8.5"/><polyline points="292.2,241.7 320.6,244.5" fill="none" stroke="#555555" stroke-width="9.2" stroke-dasharray="6 4" stroke-opacity=".7"/><polyline points="292.2,241.7 320.6,244.5" fill="none" stroke="#ffffff" stroke-width="5.6"/><polyline points="292.2,241.7 320.6,244.5" fill="none" stroke="#fa8072" stroke-width="3" stroke-dasharray="8 5"/>
<polyline points="344.7,244.5 360.0,246.2" fill="none" stroke="#f5f2ee" stroke-width="8.5"/><polyline points="344.7,244.5 360.0,246.2" fill="none" stroke="#555555" stroke-width="9.2" stroke-dasharray="6 4" stroke-opacity=".7"/><polyline points="344.7,244.5 360.0,246.2" fill="none" stroke="#ffffff" stroke-width="5.6"/><polyline points="344.7,244.5 360.0,246.2" fill="none" stroke="#fa8072" stroke-width="3" stroke-dasharray="8 5"/>
<polyline points="332.5,192.9 329.1,236.9" fill="none" stroke="#f5f2ee" stroke-width="8.5"/><polyline points="332.5,192.9 329.1,236.9" fill="none" stroke="#555555" stroke-width="9.2" stroke-dasharray="6 4" stroke-opacity=".7"/><polyline points="332.5,192.9 329.1,236.9" fill="none" stroke="#ffffff" stroke-width="5.6"/><polyline points="332.5,192.9 329.1,236.9" fill="none" stroke="#fa8072" stroke-width="3" stroke-dasharray="8 5"/>
<polyline points="337.6,262.4 341.8,285.1" fill="none" stroke="#f5f2ee" stroke-width="8.5"/><polyline points="337.6,262.4 341.8,285.1" fill="none" stroke="#555555" stroke-width="9.2" stroke-dasharray="6 4" stroke-opacity=".7"/><polyline points="337.6,262.4 341.8,285.1" fill="none" stroke="#ffffff" stroke-width="5.6"/><polyline points="337.6,262.4 341.8,285.1" fill="none" stroke="#fa8072" stroke-width="3" stroke-dasharray="8 5"/>
<polyline points="327.7,351.8 327.7,385.0" fill="none" stroke="#f5f2ee" stroke-width="8.5"/><polyline points="327.7,351.8 327.7,385.0" fill="none" stroke="#555555" stroke-width="9.2" stroke-dasharray="6 4" stroke-opacity=".7"/><polyline points="327.7,351.8 327.7,385.0" fill="none" stroke="#ffffff" stroke-width="5.6"/><polyline points="327.7,351.8 327.7,385.0" fill="none" stroke="#fa8072" stroke-width="3" stroke-dasharray="8 5"/>
<polygon points="0.0,181.6 27.0,181.6 27.0,197.2 0.0,197.2" fill="none" stroke="#fa8072" stroke-width="2.2" stroke-dasharray="8 5"/>
<circle cx="5.7" cy="36.9" r="3.6" fill="#ac39ac"/><circle cx="85.1" cy="146.1" r="3.6" fill="#ac39ac"/><circle cx="151.8" cy="154.6" r="3.6" fill="#ac39ac"/><circle cx="164.5" cy="292.2" r="3.6" fill="#ac39ac"/><circle cx="164.5" cy="326.2" r="3.6" fill="#ac39ac"/><circle cx="48.8" cy="344.7" r="3.6" fill="#ac39ac"/><circle cx="82.3" cy="347.5" r="3.6" fill="#ac39ac"/><circle cx="145.2" cy="360.3" r="3.6" fill="#ac39ac"/><circle cx="236.9" cy="193.8" r="3.6" fill="#ac39ac"/><circle cx="270.1" cy="197.2" r="3.6" fill="#ac39ac"/><circle cx="286.0" cy="198.0" r="3.6" fill="#ac39ac"/><circle cx="303.5" cy="200.3" r="3.6" fill="#ac39ac"/><circle cx="318.3" cy="200.9" r="3.6" fill="#ac39ac"/><circle cx="342.7" cy="199.7" r="3.6" fill="#ac39ac"/><circle cx="229.8" cy="224.1" r="3.6" fill="#ac39ac"/><circle cx="317.2" cy="220.7" r="3.6" fill="#ac39ac"/><circle cx="339.9" cy="234.9" r="3.6" fill="#ac39ac"/><circle cx="261.6" cy="256.7" r="3.6" fill="#ac39ac"/><circle cx="271.8" cy="261.0" r="3.6" fill="#ac39ac"/><circle cx="285.1" cy="263.3" r="3.6" fill="#ac39ac"/><circle cx="297.3" cy="249.6" r="3.6" fill="#ac39ac"/><circle cx="315.5" cy="253.3" r="3.6" fill="#ac39ac"/><circle cx="329.6" cy="279.4" r="3.6" fill="#ac39ac"/><circle cx="348.4" cy="283.7" r="3.6" fill="#ac39ac"/><circle cx="313.5" cy="303.5" r="3.6" fill="#ac39ac"/><circle cx="357.4" cy="309.2" r="3.6" fill="#ac39ac"/><circle cx="288.8" cy="161.7" r="3.6" fill="#ac39ac"/><circle cx="217.9" cy="380.1" r="3.6" fill="#ac39ac"/>
<circle cx="107.8" cy="61.8" r="3.6" fill="#c77400"/><circle cx="44.8" cy="284.5" r="3.6" fill="#c77400"/><circle cx="105.0" cy="354.6" r="3.6" fill="#c77400"/><circle cx="233.2" cy="151.8" r="3.6" fill="#c77400"/><circle cx="221.8" cy="327.7" r="3.6" fill="#c77400"/><circle cx="124.8" cy="0.0" r="3.6" fill="#c77400"/>
<circle cx="177.3" cy="3.4" r="4.5" fill="#aed1a0"/><circle cx="178.7" cy="24.1" r="4.5" fill="#aed1a0"/><circle cx="183.8" cy="66.7" r="4.5" fill="#aed1a0"/>
<polygon points="365.7,0.0 442.3,0.0 431.5,178.7 374.2,171.6 365.7,42.6" fill="#d9d0c9" stroke="#c8bcb1" stroke-width="1"/>
<polygon points="382.7,45.4 397.4,46.8 394.0,158.9 381.3,158.9" fill="#f2efe9"/>
<polygon points="433.2,0.0 444.0,0.0 432.6,177.3 428.9,177.3" fill="#f2efe9"/>
<polygon points="360.0,0.0 394.0,0.0 393.5,17.6 360.0,17.6" fill="#cdd0b6"/>
<polygon points="360.0,17.6 367.1,17.6 365.7,46.8 360.0,46.8" fill="#eeeeee"/>
<polygon points="469.2,0.0 700.4,0.0 676.3,148.9 459.3,127.1" fill="#d9d0c9" stroke="#c8bcb1" stroke-width="1"/>
<polygon points="578.4,66.7 587.0,66.7 587.0,79.4 606.8,85.1 604.0,107.8 581.3,105.0 575.6,85.1" fill="#f2efe9"/>
<polygon points="623.8,90.8 643.7,93.6 640.9,119.1 626.7,116.3" fill="#f2efe9"/>
<polyline points="469.2,99.3 555.7,103.5 558.6,136.2" fill="none" stroke="#c8bcb1" stroke-width="1"/>
<polyline points="555.7,103.5 626.7,107.8 623.8,143.3" fill="none" stroke="#c8bcb1" stroke-width="1"/>
<polyline points="609.6,0.0 612.5,14.2 697.6,22.7" fill="none" stroke="#c8bcb1" stroke-width="1"/>
<polyline points="587.0,51.1 686.2,61.0" fill="none" stroke="#c8bcb1" stroke-width="1"/>
<polygon points="360.0,198.6 428.1,202.8 416.7,385.0 360.0,385.0" fill="#d9d0c9" stroke="#c8bcb1" stroke-width="1"/>
<polygon points="450.8,323.4 626.7,348.9 621.0,385.0 443.7,385.0" fill="#d9d0c9" stroke="#c8bcb1" stroke-width="1"/>
<polygon points="493.3,360.3 530.2,363.1 527.4,385.0 487.7,385.0" fill="#f2efe9"/>
<polyline points="507.5,330.5 501.8,385.0" fill="none" stroke="#c8bcb1" stroke-width="1"/>
<polyline points="552.9,339.0 547.2,385.0" fill="none" stroke="#c8bcb1" stroke-width="1"/>
<polygon points="703.3,346.1 720.0,346.1 720.0,385.0 699.0,385.0" fill="#f2efe9"/>
<polygon points="470.6,202.8 592.6,211.3 594.0,224.1 615.3,228.4 616.7,244.0 629.5,261.0 626.7,280.9 609.6,283.7 611.1,300.7 578.4,309.2 462.1,297.9 457.9,261.0 462.1,227.0" fill="#c4b6ab" stroke="#b5a79c" stroke-width="1"/>
<polygon points="443.7,0.0 467.8,0.0 457.9,127.7 455.0,153.2 445.1,292.2 445.1,312.1 442.3,385.0 418.2,385.0 430.9,195.7 432.3,170.2" fill="#dddde8" stroke="#c3c3d0" stroke-width="1"/>
<polygon points="391.2,171.6 433.2,174.5 431.5,197.2 391.2,195.7" fill="#dddde8"/>
<polygon points="457.9,127.7 677.7,150.4 694.8,153.2 672.1,175.9 666.4,174.5 455.0,153.2" fill="#dddde8" stroke="#c3c3d0" stroke-width="1"/>
<polygon points="446.5,289.4 639.4,319.1 629.5,341.8 445.1,312.1" fill="#dddde8" stroke="#c3c3d0" stroke-width="1"/>
<polygon points="679.1,148.9 695.3,153.8 686.8,175.9 672.1,249.6 652.8,385.0 626.7,385.0 639.4,319.1 666.4,174.5" fill="#dddde8" stroke="#c3c3d0" stroke-width="1"/>
<polygon points="445.1,130.5 457.9,128.2 455.0,153.2 445.1,292.2 446.5,312.1 439.4,312.1" fill="#dddde8"/>
<polygon points="640.9,317.7 667.8,174.5 679.1,158.9 683.4,175.9 657.9,312.1 652.2,340.4 629.5,341.8" fill="#dddde8"/>
<polygon points="365.7,235.5 388.4,235.5 387.0,265.2 364.3,263.8" fill="#dddde8" stroke="#c3c3d0" stroke-width="1"/>
<polygon points="701.8,0.0 720.0,0.0 697.6,147.5 677.7,144.7" fill="#ffffff" stroke="#d0ccc8" stroke-width="1"/>
<circle cx="687.7" cy="141.8" r="10.5" fill="#fff"/><circle cx="687.7" cy="141.3" r="2.4" fill="#666"/>
<rect x="371.9" y="47.7" width="10.8" height="115.5" rx="8" fill="#fff"/>
<polygon points="360.0,170.2 385.5,171.6 385.5,195.7 360.0,194.3" fill="#ffffff"/>
<circle cx="385.0" cy="183.8" r="12" fill="#fff"/><circle cx="385.0" cy="184.8" r="2.4" fill="#666"/>
<polyline points="465.0,52.5 517.4,55.3 561.4,25.5 691.9,46.8" fill="none" stroke="#f5f2ee" stroke-width="8.5"/><polyline points="465.0,52.5 517.4,55.3 561.4,25.5 691.9,46.8" fill="none" stroke="#555555" stroke-width="9.2" stroke-dasharray="6 4" stroke-opacity=".7"/><polyline points="465.0,52.5 517.4,55.3 561.4,25.5 691.9,46.8" fill="none" stroke="#ffffff" stroke-width="5.6"/><polyline points="465.0,52.5 517.4,55.3 561.4,25.5 691.9,46.8" fill="none" stroke="#fa8072" stroke-width="3" stroke-dasharray="8 5"/>
<polyline points="453.6,193.8 518.9,197.2" fill="none" stroke="#fa8072" stroke-width="2.5" stroke-dasharray="8 5"/>
<polyline points="565.7,202.0 598.3,206.5 649.4,253.9" fill="none" stroke="#fa8072" stroke-width="2.5" stroke-dasharray="8 5"/>
<polyline points="360.0,246.2 365.7,246.8" fill="none" stroke="#f5f2ee" stroke-width="8.5"/><polyline points="360.0,246.2 365.7,246.8" fill="none" stroke="#555555" stroke-width="9.2" stroke-dasharray="6 4" stroke-opacity=".7"/><polyline points="360.0,246.2 365.7,246.8" fill="none" stroke="#ffffff" stroke-width="5.6"/><polyline points="360.0,246.2 365.7,246.8" fill="none" stroke="#fa8072" stroke-width="3" stroke-dasharray="8 5"/>
<polyline points="388.4,249.1 426.7,251.9" fill="none" stroke="#f5f2ee" stroke-width="8.5"/><polyline points="388.4,249.1 426.7,251.9" fill="none" stroke="#555555" stroke-width="9.2" stroke-dasharray="6 4" stroke-opacity=".7"/><polyline points="388.4,249.1 426.7,251.9" fill="none" stroke="#ffffff" stroke-width="5.6"/><polyline points="388.4,249.1 426.7,251.9" fill="none" stroke="#fa8072" stroke-width="3" stroke-dasharray="8 5"/>
<polyline points="646.5,375.9 720.0,383.0" fill="none" stroke="#f5f2ee" stroke-width="8.5"/><polyline points="646.5,375.9 720.0,383.0" fill="none" stroke="#555555" stroke-width="9.2" stroke-dasharray="6 4" stroke-opacity=".7"/><polyline points="646.5,375.9 720.0,383.0" fill="none" stroke="#ffffff" stroke-width="5.6"/><polyline points="646.5,375.9 720.0,383.0" fill="none" stroke="#fa8072" stroke-width="3" stroke-dasharray="8 5"/>
<circle cx="505.5" cy="21.8" r="3.6" fill="#ac39ac"/><circle cx="484.8" cy="80.0" r="3.6" fill="#ac39ac"/><circle cx="614.5" cy="41.1" r="3.6" fill="#ac39ac"/><circle cx="684.0" cy="7.9" r="3.6" fill="#ac39ac"/><circle cx="679.7" cy="26.1" r="3.6" fill="#ac39ac"/><circle cx="654.2" cy="141.8" r="3.6" fill="#ac39ac"/><circle cx="366.2" cy="204.3" r="3.6" fill="#ac39ac"/><circle cx="386.1" cy="208.5" r="3.6" fill="#ac39ac"/><circle cx="397.7" cy="207.1" r="3.6" fill="#ac39ac"/><circle cx="416.7" cy="260.4" r="3.6" fill="#ac39ac"/><circle cx="416.2" cy="272.9" r="3.6" fill="#ac39ac"/><circle cx="684.8" cy="275.7" r="3.6" fill="#ac39ac"/><circle cx="680.6" cy="297.3" r="3.6" fill="#ac39ac"/><circle cx="610.5" cy="373.9" r="3.6" fill="#ac39ac"/><circle cx="360.0" cy="309.2" r="3.6" fill="#ac39ac"/>
<circle cx="474.9" cy="120.6" r="3.6" fill="#c77400"/><circle cx="616.2" cy="59.0" r="3.6" fill="#c77400"/><circle cx="666.4" cy="52.5" r="3.6" fill="#c77400"/><circle cx="407.4" cy="212.2" r="3.6" fill="#c77400"/><circle cx="373.6" cy="272.9" r="3.6" fill="#c77400"/><circle cx="459.9" cy="343.8" r="3.6" fill="#c77400"/><circle cx="457.9" cy="354.6" r="3.6" fill="#c77400"/><circle cx="520.3" cy="344.1" r="3.6" fill="#c77400"/><circle cx="668.4" cy="361.7" r="3.6" fill="#c77400"/><circle cx="604.0" cy="0.0" r="3.6" fill="#c77400"/>
<circle cx="616.7" cy="243.1" r="4.5" fill="#aed1a0"/><circle cx="623.3" cy="281.7" r="4.5" fill="#aed1a0"/><circle cx="604.5" cy="307.2" r="4.5" fill="#aed1a0"/><circle cx="621.0" cy="318.3" r="4.5" fill="#aed1a0"/>
<circle cx="504.1" cy="166.5" r="9.5" fill="#aad3df" fill-opacity=".85"/><circle cx="504.1" cy="166.5" r="3" fill="#5768ec"/>
<polygon points="720.0,0.0 901.6,0.0 816.5,385.0 666.1,385.0 686.0,255.3 704.4,154.6 711.5,70.9 720.0,68.1" fill="#d9d0c9" stroke="#c8bcb1" stroke-width="1"/>
<polygon points="773.9,0.0 842.0,0.0 844.8,31.2 856.2,39.7 815.0,211.3 844.8,234.9 771.1,246.8 747.0,261.0 742.7,295.0 772.5,322.0 741.3,331.9 737.0,320.6 720.0,314.9 729.9,263.8 737.0,258.2 755.5,164.5 748.4,161.7 768.2,36.9" fill="#f2efe9" stroke="#c8bcb1" stroke-width="1"/>
<polyline points="708.7,114.9 754.0,120.6" fill="none" stroke="#c8bcb1" stroke-width="1"/>
<polyline points="703.0,161.7 748.4,170.2" fill="none" stroke="#c8bcb1" stroke-width="1"/>
<polyline points="688.8,255.3 731.3,263.8" fill="none" stroke="#c8bcb1" stroke-width="1"/>
<polyline points="741.3,331.9 737.0,347.5 816.5,354.6" fill="none" stroke="#c8bcb1" stroke-width="1"/>
<polyline points="771.1,351.8 765.4,385.0" fill="none" stroke="#c8bcb1" stroke-width="1"/>
<polyline points="720.0,314.9 714.3,385.0" fill="none" stroke="#c8bcb1" stroke-width="1"/>
<polygon points="989.5,85.1 1080.0,56.7 1080.0,371.6 1003.7,354.6 966.8,340.4 964.0,326.2 938.4,331.9 961.1,215.6 990.9,218.4 969.6,209.9 979.6,130.5 1010.8,134.8 1015.0,110.6 988.1,106.4" fill="#d9d0c9" stroke="#c8bcb1" stroke-width="1"/>
<polyline points="990.9,218.4 966.8,340.4" fill="none" stroke="#c8bcb1" stroke-width="1"/>
<polygon points="955.5,0.0 1080.0,0.0 1080.0,53.9 1063.3,53.9 1060.4,70.9 981.0,75.2 942.7,68.1" fill="#cdebb0"/>
<polygon points="975.3,48.2 992.3,48.2 992.3,74.3 943.5,68.9 947.0,61.0 975.3,61.0" fill="#c8facc"/>
<polygon points="1051.9,0.0 1080.0,0.0 1080.0,8.5 1054.8,8.5" fill="#c8facc"/>
<polygon points="901.6,0.0 955.5,0.0 928.5,99.3 914.3,184.4 887.4,295.0 878.9,385.0 816.5,385.0" fill="#ffffff" stroke="#d0ccc8" stroke-width="1"/>
<polygon points="887.4,295.0 893.0,317.7 915.7,343.3 949.8,385.0 918.6,385.0 890.2,348.9 878.9,385.0" fill="#f6f6f4"/>
<polyline points="931.1,0.0 842.0,385.0" fill="none" stroke="#5c5c5c" stroke-width="3"/>
<polyline points="924.8,0.0 835.7,385.0" fill="none" stroke="#5c5c5c" stroke-width="3"/>
<polyline points="918.6,0.0 829.5,385.0" fill="none" stroke="#c4c4c4" stroke-width="1.6"/>
<polyline points="890.2,93.6 867.5,198.6 853.3,283.7" fill="none" stroke="#dddddd" stroke-width="1.5"/>
<polyline points="904.4,198.6 887.4,295.0" fill="none" stroke="#dddddd" stroke-width="1.5"/>
<polygon points="938.4,93.6 992.3,106.4 989.5,114.9 937.0,102.1" fill="#fbfbfb" stroke="#e0e0e0" stroke-width="1"/>
<polyline points="954.0,0.0 929.9,99.3 921.4,141.8 929.9,170.2 918.6,227.0 898.7,334.8 895.9,385.0" fill="none" stroke="#fa8072" stroke-width="2.2" stroke-dasharray="8 5"/>
<polyline points="918.6,225.5 944.1,229.8 961.1,219.9" fill="none" stroke="#fa8072" stroke-width="2.2" stroke-dasharray="8 5"/>
<polyline points="944.1,229.8 972.5,235.5" fill="none" stroke="#fa8072" stroke-width="3.5" stroke-dasharray="8 5"/>
<polyline points="881.7,337.6 947.0,358.9 1080.0,380.1" fill="none" stroke="#fa8072" stroke-width="2.2" stroke-dasharray="8 5"/>
<polyline points="951.2,329.1 947.0,385.0" fill="none" stroke="#fa8072" stroke-width="2.2" stroke-dasharray="8 5"/>
<polyline points="1054.8,0.0 1057.6,28.4 1071.8,31.2 1068.9,53.9" fill="none" stroke="#fa8072" stroke-width="3" stroke-dasharray="8 5"/>
<polyline points="1000.9,0.0 1080.0,2.8" fill="none" stroke="#fa8072" stroke-width="2" stroke-dasharray="8 5"/>
<circle cx="968.2" cy="4.3" r="4.8" fill="#aed1a0"/><circle cx="1013.6" cy="14.2" r="4.8" fill="#aed1a0"/><circle cx="1068.9" cy="15.6" r="4.8" fill="#aed1a0"/><circle cx="951.2" cy="46.8" r="4.8" fill="#aed1a0"/><circle cx="910.6" cy="154.0" r="4.8" fill="#aed1a0"/><circle cx="932.2" cy="242.0" r="4.8" fill="#aed1a0"/><circle cx="928.5" cy="257.6" r="4.8" fill="#aed1a0"/><circle cx="923.7" cy="276.0" r="4.8" fill="#aed1a0"/><circle cx="920.3" cy="293.6" r="4.8" fill="#aed1a0"/><circle cx="915.7" cy="313.5" r="4.8" fill="#aed1a0"/><circle cx="901.6" cy="326.2" r="4.8" fill="#aed1a0"/><circle cx="915.2" cy="360.3" r="4.8" fill="#aed1a0"/><circle cx="890.2" cy="375.9" r="4.8" fill="#aed1a0"/><circle cx="909.5" cy="378.7" r="4.8" fill="#aed1a0"/>
<circle cx="738.4" cy="36.9" r="3.6" fill="#ac39ac"/><circle cx="803.7" cy="331.9" r="3.6" fill="#ac39ac"/><circle cx="795.2" cy="365.4" r="3.6" fill="#ac39ac"/>
<circle cx="736.5" cy="14.8" r="3.6" fill="#c77400"/><circle cx="983.3" cy="324.8" r="3.6" fill="#c77400"/>
</g>
<g filter="url(#mb2)"><text x="130.5" y="26.4" font-size="19.5" fill="#727272" text-anchor="middle" stroke="#fff" stroke-opacity=".75" stroke-width="3" paint-order="stroke" stroke-linejoin="round">11</text><text x="15.6" y="158.3" font-size="19.5" fill="#727272" text-anchor="middle" stroke="#fff" stroke-opacity=".75" stroke-width="3" paint-order="stroke" stroke-linejoin="round">2</text><text x="12.8" y="185.2" font-size="19.5" fill="#727272" text-anchor="middle" stroke="#fff" stroke-opacity=".75" stroke-width="3" paint-order="stroke" stroke-linejoin="round">2</text><text x="183.0" y="171.1" font-size="19.5" fill="#727272" text-anchor="middle" stroke="#fff" stroke-opacity=".75" stroke-width="3" paint-order="stroke" stroke-linejoin="round">1</text><text x="253.9" y="168.2" font-size="19.5" fill="#727272" text-anchor="middle" stroke="#fff" stroke-opacity=".75" stroke-width="3" paint-order="stroke" stroke-linejoin="round">3</text><text x="178.7" y="249.1" font-size="19.5" fill="#727272" text-anchor="middle" stroke="#fff" stroke-opacity=".75" stroke-width="3" paint-order="stroke" stroke-linejoin="round">9</text><text x="224.1" y="5.7" font-size="19.5" fill="#727272" text-anchor="middle" stroke="#fff" stroke-opacity=".75" stroke-width="3" paint-order="stroke" stroke-linejoin="round">12</text><text x="476.3" y="36.3" font-size="19.5" fill="#727272" text-anchor="middle" stroke="#fff" stroke-opacity=".75" stroke-width="3" paint-order="stroke" stroke-linejoin="round">10</text><text x="511.8" y="122.0" font-size="19.5" fill="#727272" text-anchor="middle" stroke="#fff" stroke-opacity=".75" stroke-width="3" paint-order="stroke" stroke-linejoin="round">2</text><text x="592.6" y="122.0" font-size="19.5" fill="#727272" text-anchor="middle" stroke="#fff" stroke-opacity=".75" stroke-width="3" paint-order="stroke" stroke-linejoin="round">3</text><text x="676.3" y="96.5" font-size="19.5" fill="#727272" text-anchor="middle" stroke="#fff" stroke-opacity=".75" stroke-width="3" paint-order="stroke" stroke-linejoin="round">5</text><text x="710.4" y="141.3" font-size="19.5" fill="#727272" text-anchor="middle" stroke="#fff" stroke-opacity=".75" stroke-width="3" paint-order="stroke" stroke-linejoin="round">14</text><text x="382.7" y="154.9" font-size="19.5" fill="#727272" text-anchor="middle" stroke="#fff" stroke-opacity=".75" stroke-width="3" paint-order="stroke" stroke-linejoin="round">23</text><text x="378.4" y="237.2" font-size="19.5" fill="#727272" text-anchor="middle" stroke="#fff" stroke-opacity=".75" stroke-width="3" paint-order="stroke" stroke-linejoin="round">4</text><text x="422.4" y="246.8" font-size="19.5" fill="#727272" text-anchor="middle" stroke="#fff" stroke-opacity=".75" stroke-width="3" paint-order="stroke" stroke-linejoin="round">7</text><text x="418.2" y="307.8" font-size="19.5" fill="#727272" text-anchor="middle" stroke="#fff" stroke-opacity=".75" stroke-width="3" paint-order="stroke" stroke-linejoin="round">3</text><text x="413.9" y="367.4" font-size="19.5" fill="#727272" text-anchor="middle" stroke="#fff" stroke-opacity=".75" stroke-width="3" paint-order="stroke" stroke-linejoin="round">1</text><text x="771.1" y="52.5" font-size="19.5" fill="#727272" text-anchor="middle" stroke="#fff" stroke-opacity=".75" stroke-width="3" paint-order="stroke" stroke-linejoin="round">16b</text><text x="765.4" y="90.8" font-size="19.5" fill="#727272" text-anchor="middle" stroke="#fff" stroke-opacity=".75" stroke-width="3" paint-order="stroke" stroke-linejoin="round">16a</text><text x="790.9" y="283.1" font-size="19.5" fill="#727272" text-anchor="middle" stroke="#fff" stroke-opacity=".75" stroke-width="3" paint-order="stroke" stroke-linejoin="round">3-5</text><text x="825.0" y="334.8" font-size="19.5" fill="#727272" text-anchor="middle" stroke="#fff" stroke-opacity=".75" stroke-width="3" paint-order="stroke" stroke-linejoin="round">3</text><text x="863.3" y="5.7" font-size="19.5" fill="#727272" text-anchor="middle" stroke="#fff" stroke-opacity=".75" stroke-width="3" paint-order="stroke" stroke-linejoin="round">20</text><text x="181.6" y="81.4" font-size="18.9" fill="#94703a" text-anchor="middle" stroke="#fff" stroke-opacity=".75" stroke-width="3" paint-order="stroke" stroke-linejoin="round">Junges</text><text x="181.6" y="104.7" font-size="18.9" fill="#94703a" text-anchor="middle" stroke="#fff" stroke-opacity=".75" stroke-width="3" paint-order="stroke" stroke-linejoin="round">Paar</text><text x="312.1" y="18.2" font-size="16.6" fill="#666a58" text-anchor="middle" font-style="italic" font-family="Liberation Sans, sans-serif" stroke="#fff" stroke-opacity=".75" stroke-width="3" paint-order="stroke" stroke-linejoin="round">LÖHRS</text><text x="312.1" y="42.0" font-size="16.6" fill="#666a58" text-anchor="middle" font-style="italic" font-family="Liberation Sans, sans-serif" stroke="#fff" stroke-opacity=".75" stroke-width="3" paint-order="stroke" stroke-linejoin="round">HOF</text><text x="300.7" y="93.6" font-size="31" fill="#2f9be0" text-anchor="middle" stroke="#fff" stroke-opacity=".75" stroke-width="3" paint-order="stroke" stroke-linejoin="round">P</text><text x="300.7" y="116.6" font-size="18.9" fill="#4d94f0" text-anchor="middle" stroke="#fff" stroke-opacity=".75" stroke-width="3" paint-order="stroke" stroke-linejoin="round">Parkplatz</text><text x="300.7" y="140.7" font-size="18.9" fill="#4d94f0" text-anchor="middle" stroke="#fff" stroke-opacity=".75" stroke-width="3" paint-order="stroke" stroke-linejoin="round">Reichsstraße</text><text x="137.6" y="132.2" font-size="20.6" fill="#333" text-anchor="middle" stroke="#fff" stroke-opacity=".75" stroke-width="3" paint-order="stroke" stroke-linejoin="round" transform="rotate(8 137.6 132.2)">lzgäßchen</text><text x="198.6" y="22.7" font-size="20.6" fill="#333" text-anchor="middle" stroke="#fff" stroke-opacity=".75" stroke-width="3" paint-order="stroke" stroke-linejoin="round" transform="rotate(82 198.6 22.7)">traße</text><text x="25.0" y="317.2" font-size="20.6" fill="#333" text-anchor="middle" stroke="#fff" stroke-opacity=".75" stroke-width="3" paint-order="stroke" stroke-linejoin="round" transform="rotate(-83 25.0 317.2)">Naschmarkt</text><text x="231.2" y="286.0" font-size="17.3" fill="#3f9a3f" text-anchor="middle" font-style="italic" font-family="Liberation Sans, sans-serif" stroke="#fff" stroke-opacity=".75" stroke-width="3" paint-order="stroke" stroke-linejoin="round">PELOTON</text><text x="300.7" y="339.3" font-size="20.6" fill="#555" text-anchor="start" stroke="#fff" stroke-opacity=".75" stroke-width="3" paint-order="stroke" stroke-linejoin="round">Hansahaus</text><text x="596.9" y="89.6" font-size="18.9" fill="#94703a" text-anchor="middle" stroke="#fff" stroke-opacity=".75" stroke-width="3" paint-order="stroke" stroke-linejoin="round">Funzel</text><text x="562.8" y="158.3" font-size="20.6" fill="#222" text-anchor="middle" stroke="#fff" stroke-opacity=".75" stroke-width="3" paint-order="stroke" stroke-linejoin="round" transform="rotate(6.5 562.8 158.3)">Nikolaikirchhof</text><text x="538.7" y="325.7" font-size="20.6" fill="#222" text-anchor="middle" stroke="#fff" stroke-opacity=".75" stroke-width="3" paint-order="stroke" stroke-linejoin="round" transform="rotate(9 538.7 325.7)">Nikolaikirchhof</text><text x="664.1" y="251.1" font-size="20.6" fill="#222" text-anchor="middle" stroke="#fff" stroke-opacity=".75" stroke-width="3" paint-order="stroke" stroke-linejoin="round" transform="rotate(-78 664.1 251.1)">Ritterstraße</text><text x="706.7" y="36.9" font-size="20.6" fill="#222" text-anchor="middle" stroke="#fff" stroke-opacity=".75" stroke-width="3" paint-order="stroke" stroke-linejoin="round" transform="rotate(-78 706.7 36.9)">Ritterstra</text><text x="540.7" y="292.5" font-size="18.9" fill="#2d2d6e" text-anchor="middle" stroke="#fff" stroke-opacity=".75" stroke-width="3" paint-order="stroke" stroke-linejoin="round">Nikolaikirche</text><text x="836.3" y="181.3" font-size="18.7" fill="#6c7136" text-anchor="middle" font-style="italic" font-family="Liberation Sans, sans-serif" stroke="#fff" stroke-opacity=".75" stroke-width="3" paint-order="stroke" stroke-linejoin="round">Studentenwerk;</text><text x="836.3" y="204.5" font-size="18.7" fill="#6c7136" text-anchor="middle" font-style="italic" font-family="Liberation Sans, sans-serif" stroke="#fff" stroke-opacity=".75" stroke-width="3" paint-order="stroke" stroke-linejoin="round">Akademische</text><text x="836.3" y="228.4" font-size="18.7" fill="#6c7136" text-anchor="middle" font-style="italic" font-family="Liberation Sans, sans-serif" stroke="#fff" stroke-opacity=".75" stroke-width="3" paint-order="stroke" stroke-linejoin="round">Verwaltung</text><text x="907.8" y="55.3" font-size="20.6" fill="#222" text-anchor="middle" stroke="#fff" stroke-opacity=".75" stroke-width="3" paint-order="stroke" stroke-linejoin="round" transform="rotate(-76 907.8 55.3)">Goethestra</text><text x="871.8" y="361.7" font-size="20.6" fill="#222" text-anchor="middle" stroke="#fff" stroke-opacity=".75" stroke-width="3" paint-order="stroke" stroke-linejoin="round" transform="rotate(-80 871.8 361.7)">platz</text><text x="1025.0" y="232.9" font-size="18.9" fill="#94703a" text-anchor="start" stroke="#fff" stroke-opacity=".75" stroke-width="3" paint-order="stroke" stroke-linejoin="round">Oper L</text>
<g transform="translate(69.5 194.3)"><path d="M-13 -8v16M13 -2v10M-13 4h26M-8 -1h18" stroke="#2f9be0" stroke-width="2.4" fill="none"/><circle cx="-6" cy="-4" r="2.6" fill="#2f9be0"/></g>
<g transform="translate(411.6 96.5)"><path d="M-13 -8v16M13 -2v10M-13 4h26M-8 -1h18" stroke="#2f9be0" stroke-width="2.4" fill="none"/><circle cx="-6" cy="-4" r="2.6" fill="#2f9be0"/></g>
<g transform="translate(188.7 201.4)"><rect x="-12" y="-12" width="13" height="24" rx="2" fill="#2f9be0"/><path d="M-7 -6l4 0-3 6h4l-5 8 1-6h-3z" fill="#fff"/><path d="M6 -10v6M11 -10v6M4 -4h9v5q-4.500 5-9 0z M8.500 3v8" stroke="#2f9be0" stroke-width="2.200" fill="none"/></g>
<g transform="translate(231.2 247.4)"><circle cx="5" cy="-12" r="3.200" fill="#2f9a3a"/><path d="M-12 4l7 -3 5-8 6 2 5 5M0 -5l-1 9 5 5-2 9M-2 3l-8 8" stroke="#2f9a3a" stroke-width="2.800" fill="none" stroke-linecap="round" stroke-linejoin="round"/></g>
<g transform="translate(11.3 235.5)"><circle cx="0" cy="-11" r="2.8" fill="#734a08"/><path d="M-3 -8h6l1 11h-8zM-7 6h14M-5 11h10" stroke="#734a08" stroke-width="2.400" fill="#734a08"/></g>
<g transform="translate(181.6 41.1)"><path d="M-6 -13h12l-4 12 4 12h-12l4-12zM-8 14h16M-8 -13h16" stroke="#734a08" stroke-width="2.200" fill="none"/></g>
<g transform="translate(309.2 378.7)"><path d="M-13 -9h5l3 13h13l4-11h-19M-4 8h12" stroke="#ac39ac" stroke-width="2.400" fill="none"/><path d="M-6 -6h19l-3 9h-13z" fill="#ac39ac" fill-opacity=".55"/><circle cx="-3" cy="11" r="2.200" fill="#ac39ac"/><circle cx="9" cy="11" r="2.200" fill="#ac39ac"/></g>
<g transform="translate(535.9 58.2)"><path d="M-13 -9h5l3 13h13l4-11h-19M-4 8h12" stroke="#ac39ac" stroke-width="2.400" fill="none"/><path d="M-6 -6h19l-3 9h-13z" fill="#ac39ac" fill-opacity=".55"/><circle cx="-3" cy="11" r="2.200" fill="#ac39ac"/><circle cx="9" cy="11" r="2.200" fill="#ac39ac"/></g>
<g transform="translate(549.5 106.4)"><path d="M-14 -5l14-8 14 8zM-12 9h24v3h-24zM-10 -3h4v11h-4zM-2 -3h4v11h-4zM6 -3h4v11h-4z" fill="#734a08"/></g>
<g transform="translate(652.2 99.9)"><circle cx="0" cy="-10" r="3.400" fill="#734a08"/><path d="M-4 -5h8v10h-8zM-11 -10q-2 12 4 17v6h4M11 -10q2 12-4 17v6h-4" stroke="#734a08" stroke-width="2.600" fill="none"/><rect x="-4" y="-5" width="8" height="11" fill="#734a08"/></g>
<g transform="translate(655.6 27.0)"><circle cx="0" cy="-12" r="2.600" fill="#734a08"/><path d="M-2.500 -9h5l1.500 14h-8zM-6 8h12v4h-12z" fill="#734a08"/></g>
<g transform="translate(638.0 201.4)"><path d="M-7 -13h14l2 3v14h-18v-14zM-12 9h24v3h-24z" fill="#734a08"/><path d="M-4 -6h8M-4 -1h8" stroke="#f2efe9" stroke-width="1.800"/></g>
<g transform="translate(698.2 228.4)"><path d="M-14 -11q7-2 14 3 7-5 14-3v18q-7-2-14 3-7-5-14-3z" fill="#734a08"/><path d="M0 -8v18" stroke="#f2efe9" stroke-width="1.500"/></g>
<g transform="translate(898.7 350.4)"><path d="M-10 8l16-18M-12 5l5 6M4 -13l5 6" stroke="#734a08" stroke-width="4.500" fill="none" stroke-linecap="round"/></g>
<g transform="translate(1076.0 192.9)"><path d="M-6 -11h12v12q0 8-7 9-5-1-5-9z" fill="none" stroke="#734a08" stroke-width="2.600"/></g>
<g transform="translate(540.7 259.6)"><path d="M-10 -8.500h20M0 -9v19" stroke="#000" stroke-width="3.600" fill="none"/></g>
<g transform="translate(922.8 85.1)"><path d="M-4 10l8-20M-2 -6l6-4 1 7" stroke="#555" stroke-width="1.800" fill="none"/></g>
<g transform="translate(857.6 263.8)"><path d="M4 -10l-8 20M2 6l-6 4-1-7" stroke="#555" stroke-width="1.800" fill="none"/></g>
</g>
<defs><filter id="mb" x="-2%" y="-2%" width="104%" height="104%"><feGaussianBlur stdDeviation="0.85"/></filter><filter id="mb2" x="-2%" y="-2%" width="104%" height="104%"><feGaussianBlur stdDeviation="0.7"/></filter><linearGradient id="pin" x1="0" y1="0" x2="0" y2="1"><stop offset="0" stop-color="#4b9ad6"/><stop offset="1" stop-color="#1f6fc2"/></linearGradient><radialGradient id="psh" cx=".5" cy=".5" r=".5"><stop offset="0" stop-color="#000" stop-opacity=".62"/><stop offset="1" stop-color="#000" stop-opacity="0"/></radialGradient></defs>
<g transform="translate(540.7 253.5)"><ellipse cx="25" cy="-21" rx="38" ry="14" fill="url(#psh)" transform="rotate(-38 25 -21)"/><path d="M0 0C-6 -16 -24 -36 -24 -54A24 24 0 0 1 24 -54C24 -36 6 -16 0 0Z" fill="url(#pin)" stroke="#2a72b8" stroke-width="1.500"/><circle cx="0" cy="-53" r="9" fill="#fff"/></g>
</svg>
<div class="lctl" style="left:20px;top:20px;width:68px;height:130px"><div class="lb1">+</div><div class="lb2">−</div></div><div class="lctl" style="left:992px;top:20px;width:68px;height:68px"><svg class="ic" style="left:0;top:0;width:60px;height:60px" viewBox="0 0 60 60"><circle cx="26.9" cy="22.1" r="9.75" fill="none" stroke="#000" stroke-width="4"/><path d="M32.500 30.800l9 16.200" stroke="#000" stroke-width="5.300" stroke-linecap="round"/></svg></div>
 </div>
</div>

</body></html>
